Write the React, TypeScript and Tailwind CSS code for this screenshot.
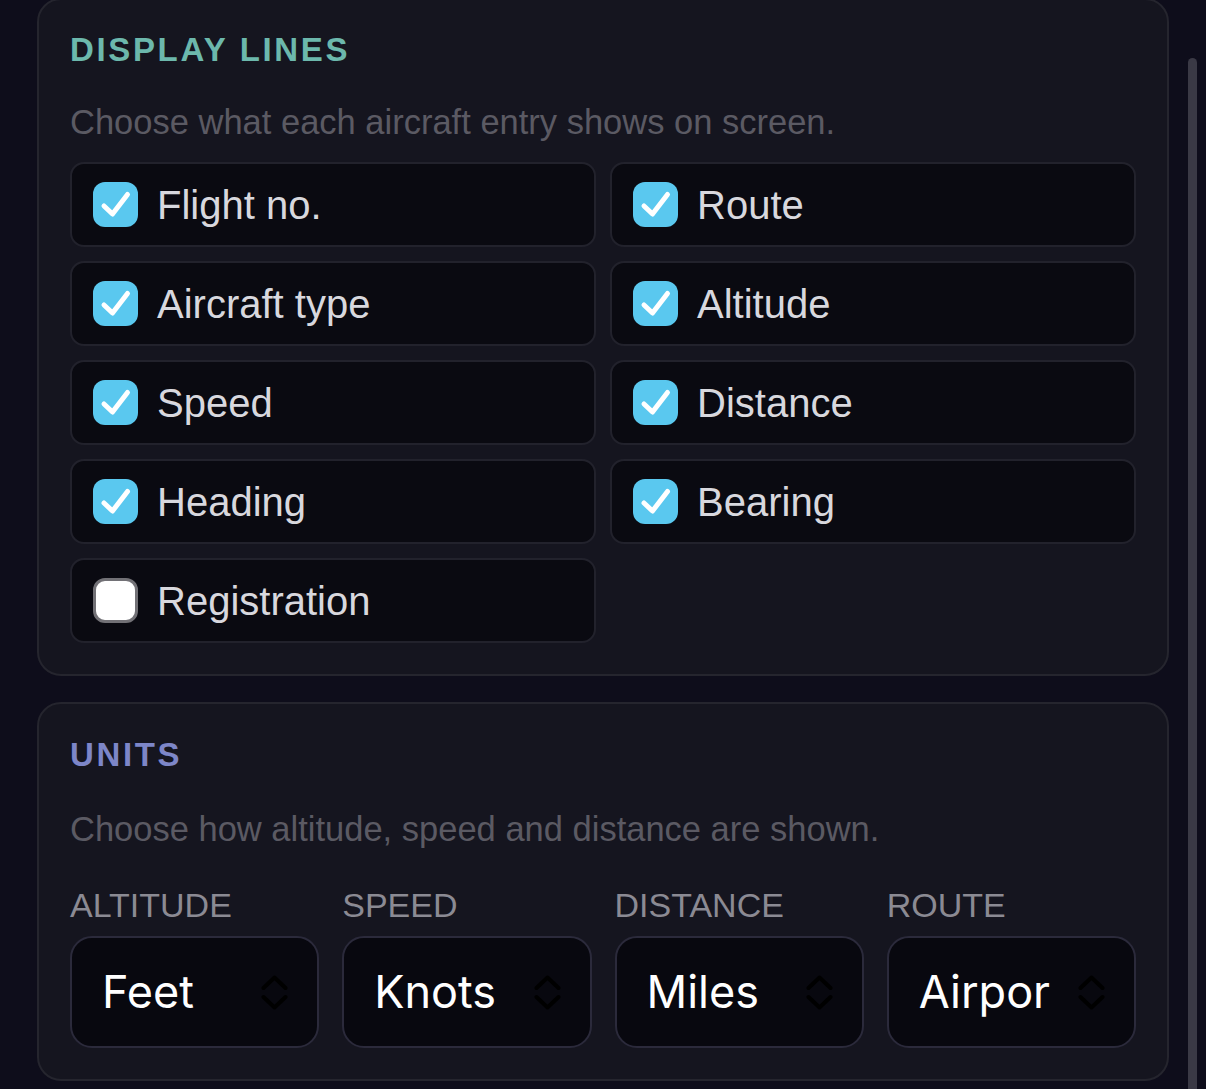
const lines = [
  { label: "Flight no.", on: true },
  { label: "Route", on: true },
  { label: "Aircraft type", on: true },
  { label: "Altitude", on: true },
  { label: "Speed", on: true },
  { label: "Distance", on: true },
  { label: "Heading", on: true },
  { label: "Bearing", on: true },
  { label: "Registration", on: false },
];

const units = [
  { label: "ALTITUDE", value: "Feet" },
  { label: "SPEED", value: "Knots" },
  { label: "DISTANCE", value: "Miles" },
  { label: "ROUTE", value: "Airport" },
];

function Chevrons() {
  return (
    <svg width="27" height="35" viewBox="0 0 27 35" fill="none" className="shrink-0">
      <path
        d="M2.5 13 L13.5 2.5 L24.5 13 M2.5 22 L13.5 32.5 L24.5 22"
        stroke="#000"
        strokeWidth="4"
        strokeLinecap="round"
        strokeLinejoin="round"
      />
    </svg>
  );
}

function Box({ on }: { on: boolean }) {
  if (!on) {
    return (
      <div className="w-[45px] h-[45px] shrink-0 rounded-[12px] bg-white border-[3px] border-[#727176]" />
    );
  }
  return (
    <div className="w-[45px] h-[45px] shrink-0 rounded-[12px] bg-[#5ac8ef]">
      <svg width="45" height="45" viewBox="0 0 45 45" fill="none">
        <path
          d="M11 24 L19.5 32 L34.5 12.5"
          stroke="#fff"
          strokeWidth="5"
          strokeLinecap="round"
          strokeLinejoin="round"
        />
      </svg>
    </div>
  );
}

export default function App() {
  return (
    <div
      className="relative h-[1089px] overflow-hidden bg-[#0e0d1b] px-[37px]"
      style={{ fontFamily: '"Liberation Sans", Arial, sans-serif' }}
    >
      {/* Display lines */}
      <section className="-mt-[2px] rounded-[24px] border-2 border-[#25252e] bg-[#15151f] p-[31px]">
        <h2 className="text-[33px] leading-[38px] font-bold tracking-[0.08em] text-[#6cb8ac]">
          DISPLAY LINES
        </h2>
        <p className="mt-[33px] text-[34.5px] leading-[40px] text-[#5b5a63]">
          Choose what each aircraft entry shows on screen.
        </p>
        <div className="mt-[20px] grid grid-cols-2 gap-[14px]">
          {lines.map((l) => (
            <div
              key={l.label}
              className="h-[85px] flex items-center gap-[19px] pl-[21px] rounded-[14px] border-2 border-[#22222c] bg-[#0a0a11]"
            >
              <Box on={l.on} />
              <span className="text-[40px] text-[#d8d8de]">{l.label}</span>
            </div>
          ))}
        </div>
      </section>

      {/* Units */}
      <section className="mt-[26px] rounded-[24px] border-2 border-[#25252e] bg-[#15151f] p-[31px]">
        <h2 className="mt-[1px] text-[33px] leading-[38px] font-bold tracking-[0.08em] text-[#7d86c8]">
          UNITS
        </h2>
        <p className="mt-[35px] text-[34.5px] leading-[40px] text-[#5b5a63]">
          Choose how altitude, speed and distance are shown.
        </p>
        <div className="mt-[36px] grid grid-cols-4 gap-x-[23px]">
          {units.map((u) => (
            <div key={u.label}>
              <div className="text-[34px] leading-[40px] text-[#8b8a93]">{u.label}</div>
              <div className="mt-[11px] h-[112px] flex items-center justify-between pl-[30px] pr-[29px] rounded-[22px] border-2 border-[#2b2a3b] bg-[#08080f]">
                <span
                  className="w-[131px] overflow-hidden whitespace-nowrap text-[45px] text-white"
                  style={{ fontFamily: "Inter, sans-serif" }}
                >
                  {u.value}
                </span>
                <Chevrons />
              </div>
            </div>
          ))}
        </div>
      </section>

      {/* scroll indicator */}
      <div className="absolute right-[9px] top-[58px] -bottom-4 w-[9px] rounded-full bg-[#3a3945]" />
    </div>
  );
}
